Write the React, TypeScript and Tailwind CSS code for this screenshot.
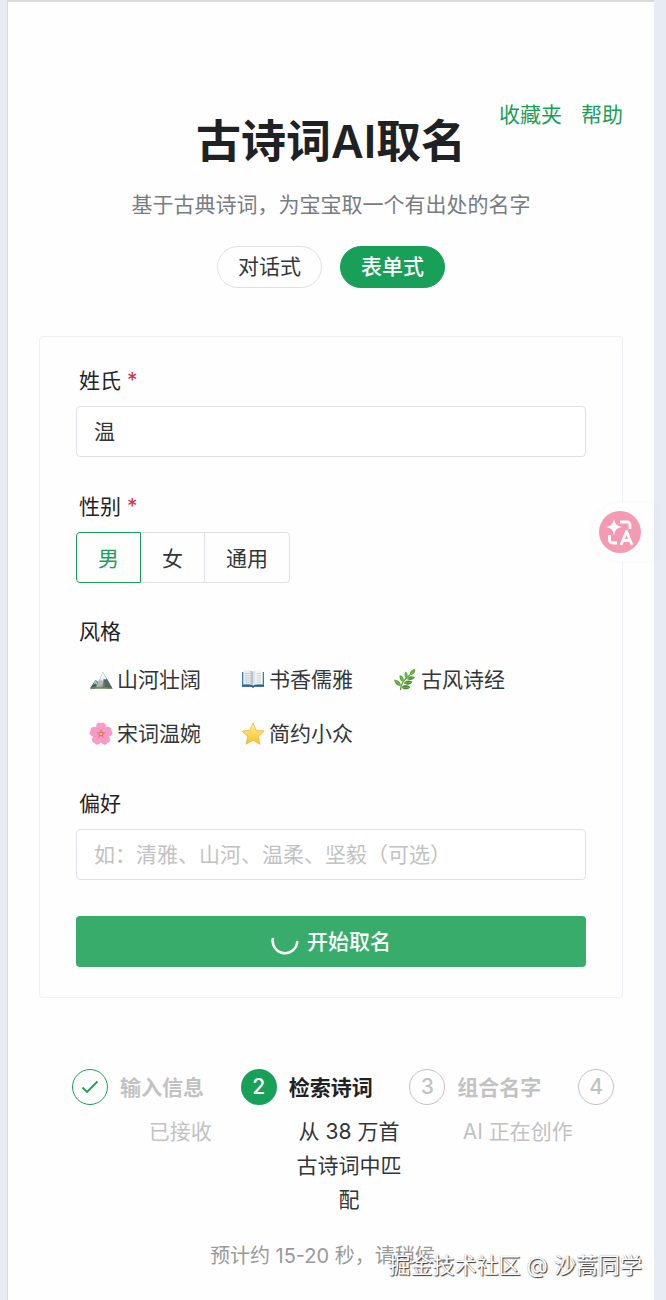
import React, { useState } from 'react';

const genders = ['男', '女', '通用'];

const MountainIcon = () => (
  <svg viewBox="0 0 24 24" className="w-6 h-6 shrink-0" aria-hidden="true">
    <path d="M1 20.5 6.5 12l3 2L14 4l9.5 16.5z" fill="#6f8087" />
    <path d="M13.8 4 9 14.5 6.8 20.5h6L14.6 12z" fill="#a9bcc6" />
    <path d="m13.8 4 3.6 6.3-1.2 1.8-1.5-1.6-1.2 3-1.6-2.2-1.6 2z" fill="#eef5f8" />
    <path d="m14.6 12 2 8.5h6.9L18 11z" fill="#58676e" />
    <path d="M1 20.5 6.5 12l2 3.5-2.2 5z" fill="#4d5b60" />
    <path d="M6.5 12 4 17l2.3-1.4L7.6 17l.8-1.6z" fill="#b5c5cc" />
    <path d="M1 20.6c2.5-2.4 5-2.6 7.4-1.4 2.3-1.8 4.4-.9 6 .2 2.4-1.6 6.3-1.2 9.1 1.2z" fill="#6d8a35" />
    <path d="m16 19 1-3 1 3zM19 19.4l1-3 1.2 3zM3.6 19l.9-2.5.9 2.5z" fill="#486a24" />
    <path d="m9.6 19.6 1.8-3.6 1 3.2z" fill="#c9a25a" />
  </svg>
);

const BookIcon = () => (
  <svg viewBox="0 0 24 24" className="w-6 h-6 shrink-0" aria-hidden="true">
    <path d="M1 4h22v14.600H1z" fill="#3f7da8" />
    <path d="M1 17h22v1.800h-9.500L12 20l-1.500-1.200H1z" fill="#2d608a" />
    <path d="M2.300 2.800C6 2 9.800 2.200 12 3.800v13.700c-2.600-1.400-6.200-1.400-9.700-.9z" fill="#e9eef0" />
    <path d="M21.700 2.800C18 2 14.200 2.200 12 3.800v13.700c2.600-1.400 6.200-1.400 9.700-.9z" fill="#f6f8f8" />
    <path d="M9.400 2.600c1 .2 1.900.6 2.600 1.200v13.700c-.8-.5-1.700-.8-2.600-.9z" fill="#bac4c9" />
    <path d="M12 3.800c.7-.6 1.400-.9 2.200-1.100v13.900c-.8.200-1.500.500-2.200.9z" fill="#dce2e5" />
    <path
      d="M4 5.500h4.500M4 7.700h4.500M4 9.900h4.500M4 12.100h4.500M4 14.300h4.500M15.500 5.500H20M15.500 7.700H20M15.500 9.900H20M15.500 12.100H20M15.500 14.300H20"
      stroke="#b3bcc0"
      strokeWidth=".7"
    />
  </svg>
);

const HerbIcon = () => (
  <svg viewBox="0 0 24 24" className="w-6 h-6 shrink-0" aria-hidden="true">
    <path d="M7.500 21.500c.3-5 3.500-10.500 10.500-15.500" fill="none" stroke="#5c9a34" strokeWidth="1.300" strokeLinecap="round" />
    <g fill="#55a838">
      <path d="M7.900 18.200C3.500 18 1.500 15 1.200 11.500c4 .4 6.800 2.600 6.700 6.700z" />
      <path d="M10.300 14C7.200 13 6 10 6.800 7c3.300 1 4.600 3.600 3.500 7z" />
      <path d="M13.200 10.600c-2.100-1.700-2.200-4.500-.5-7 2.400 1.900 2.600 4.600.5 7z" />
      <path d="M17.200 7c-.9-2.600.9-5.300 4.800-6 .6 3.500-1.500 6-4.800 6z" />
    </g>
    <g fill="#3f8c2e">
      <path d="M8.500 19.200c2.600-2.900 6-2.700 8.700.2-2.700 2.600-6.200 2.700-8.700-.2z" />
      <path d="M10.800 15.200c2-3 5.300-3.400 8.700-1.100-2.200 3-5.700 3.300-8.700 1.100z" />
      <path d="M14 11c1.600-2.700 4.500-3.400 7.800-1.800-1.500 2.900-4.900 3.600-7.800 1.800z" />
    </g>
    <path
      d="M2.500 12.800l5 5M7.600 8.500l2.500 4.800M12.800 5.200l.3 4.800M21 2.200l-3.500 4.400M9.500 19.200h6M12 15l6-.8M15 10.800l5.500-1.300"
      stroke="#93d06a"
      strokeWidth=".6"
    />
  </svg>
);

const petalAngles = [0, 72, 144, 216, 288];

const BlossomIcon = () => (
  <svg viewBox="0 0 24 24" className="w-6 h-6 shrink-0" aria-hidden="true">
    {petalAngles.map((angle) => (
      <g key={angle} transform={`rotate(${angle} 12 12)`}>
        <path
          d="M12 12C8 9.500 6.700 5.500 7.700 2.800 8.700.7 10.900.3 12 1.500c1.100-1.200 3.300-.8 4.300 1.300 1 2.700-.3 6.700-4.300 9.200z"
          fill="#f99cc5"
          stroke="#f07fb0"
          strokeWidth=".3"
        />
        <path d="M12 11.500V7.500" stroke="#e0568f" strokeWidth=".8" />
      </g>
    ))}
    <circle cx="12" cy="12" r="2.300" fill="#c9505c" />
    <circle cx="12" cy="12" r="1.600" fill="#ffd54a" />
  </svg>
);

const StarIcon = () => (
  <svg viewBox="0 0 24 24" className="w-6 h-6 shrink-0" aria-hidden="true">
    <defs>
      <linearGradient id="star-fill" x1="0" y1="0" x2="0" y2="1">
        <stop offset="0" stopColor="#fff0a0" />
        <stop offset="1" stopColor="#fdc01c" />
      </linearGradient>
    </defs>
    <path
      d="m12 .8 3.200 7.500 8 .8-6 5.300 1.800 7.900-7-4.100-7 4.100 1.800-7.900-6-5.300 8-.8z"
      fill="url(#star-fill)"
      stroke="#f2ae2b"
      strokeWidth=".7"
      strokeLinejoin="round"
    />
  </svg>
);

const TranslateIcon = () => (
  <svg viewBox="0 0 42 42" className="w-[42px] h-[42px]" aria-hidden="true">
    <circle cx="21" cy="21" r="21" fill="#f49ab3" />
    <path d="M15 8c1.200 5.200 2.600 6.800 8 8-5.400 1.200-6.800 2.800-8 8.500-1.200-5.700-2.600-7.300-8-8.500 5.400-1.200 6.800-2.800 8-8z" fill="#fff" />
    <g fill="none" stroke="#fff" strokeWidth="2.800">
      <path d="M21 11h6.500c2.300 0 3.500 1.200 3.500 3.500V18" />
      <path d="M10.500 24v4.500c0 2.300 1.200 3.500 3.500 3.500h4" />
      <path d="m22 34 5.500-13.500L33 34M24 29.500h7" strokeLinejoin="round" />
    </g>
  </svg>
);

const styles = [
  { name: '山河壮阔', icon: <MountainIcon /> },
  { name: '书香儒雅', icon: <BookIcon /> },
  { name: '古风诗经', icon: <HerbIcon /> },
  { name: '宋词温婉', icon: <BlossomIcon /> },
  { name: '简约小众', icon: <StarIcon /> },
];

const Steps = () => (
  <ol className="flex pl-[33px] pr-[9px] mt-[71px]">
    <li className="flex flex-1 gap-3 text-[#c2c2c2]">
      <span className="w-9 h-9 shrink-0 rounded-full border border-[#18a058] flex items-center justify-center">
        <svg viewBox="0 0 20 20" className="w-5 h-5" fill="none" stroke="#18a058" strokeWidth="1.800" aria-label="已完成">
          <path d="m2.500 10.500 4.500 4.500L17.500 4.500" />
        </svg>
      </span>
      <div className="flex-1">
        <h3 className="font-bold leading-[38px]">输入信息</h3>
        <p className="mt-2 leading-[34px] text-center">已接收</p>
      </div>
    </li>
    <li className="flex flex-1 gap-3 text-[#333639]" aria-current="step">
      <span className="w-9 h-9 shrink-0 rounded-full bg-[#18a058] text-white font-medium flex items-center justify-center">2</span>
      <div className="flex-1">
        <h3 className="font-bold leading-[38px] text-[#1f2225]">检索诗词</h3>
        <p className="mt-2 leading-[34px] text-center">从 38 万首古诗词中匹配</p>
      </div>
    </li>
    <li className="flex flex-1 gap-3 text-[#c2c2c2]">
      <span className="w-9 h-9 shrink-0 rounded-full border border-[#c2c2c2] font-medium flex items-center justify-center">3</span>
      <div className="flex-1">
        <h3 className="font-bold leading-[38px]">组合名字</h3>
        <p className="mt-2 leading-[34px] text-center">AI 正在创作</p>
      </div>
    </li>
    <li className="text-[#c2c2c2]">
      <span className="w-9 h-9 rounded-full border border-[#c2c2c2] font-medium flex items-center justify-center">4</span>
    </li>
  </ol>
);

const App = () => {
  const [surname, setSurname] = useState('温');
  const [gender, setGender] = useState('男');
  const [picked, setPicked] = useState<string[]>([]);
  const [preference, setPreference] = useState('');

  const toggleStyle = (name: string) => {
    setPicked(picked.includes(name) ? picked.filter((n) => n !== name) : [...picked, name]);
  };

  return (
    <div className="min-h-screen bg-[#e7ebf4] pl-[7px] pr-3 flex font-['Inter','Noto_Sans_CJK_SC',sans-serif] text-[21px] text-[#333639]">
      <main className="relative flex-1 bg-[#fefefe] border-t-2 border-l border-[#d9dadd] px-[31px] pt-[110px]">
        <nav className="absolute right-[31px] top-[97px] flex gap-[19px] leading-8 text-[#18a058]">
          <a href="#favorites">收藏夹</a>
          <a href="#help">帮助</a>
        </nav>

        <header className="text-center">
          <h1 className="text-[45px] leading-[60px] font-semibold text-[#1f2225]">古诗词AI取名</h1>
          <p className="mt-4 leading-[34px] text-[#767c82]">基于古典诗词，为宝宝取一个有出处的名字</p>
          <div className="mt-6 flex justify-center gap-[18px]">
            <button type="button" className="h-[42px] px-5 rounded-full border border-[#e0e0e6]">
              对话式
            </button>
            <button type="button" className="h-[42px] px-5 rounded-full border border-[#18a058] bg-[#18a058] text-white font-medium">
              表单式
            </button>
          </div>
        </header>

        <form className="mt-12 rounded border border-[#efeff5] px-9 pt-[27px] pb-[30px]" onSubmit={(e) => e.preventDefault()}>
          <div className="mb-[33px]">
            <label htmlFor="surname" className="block px-[3px] mb-2 leading-[34px] text-[#1f2225]">
              姓氏 <span className="text-[#d03050]">*</span>
            </label>
            <input
              id="surname"
              value={surname}
              onChange={(e) => setSurname(e.target.value)}
              className="block w-full h-[51px] px-[17px] pb-1 rounded border border-[#e0e0e6] bg-white outline-none"
            />
          </div>

          <fieldset className="mb-8">
            <legend className="px-[3px] mb-2 leading-[34px] text-[#1f2225]">
              性别 <span className="text-[#d03050]">*</span>
            </legend>
            <div className="flex">
              {genders.map((item) => (
                <label
                  key={item}
                  className="relative h-[51px] px-[21px] pt-0.5 -ml-px first:ml-0 border border-[#e0e0e6] first:rounded-l last:rounded-r flex items-center has-checked:z-10 has-checked:border-[#18a058] has-checked:text-[#18a058]"
                >
                  <input
                    type="radio"
                    name="gender"
                    value={item}
                    checked={gender === item}
                    onChange={() => setGender(item)}
                    className="sr-only"
                  />
                  {item}
                </label>
              ))}
            </div>
          </fieldset>

          <fieldset className="mb-[30px]">
            <legend className="px-[3px] mb-2 leading-[34px] text-[#1f2225]">风格</legend>
            <div className="flex flex-wrap gap-x-3.5 gap-y-2">
              {styles.map((item) => (
                <button
                  key={item.name}
                  type="button"
                  aria-pressed={picked.includes(item.name)}
                  onClick={() => toggleStyle(item.name)}
                  className="h-[46px] px-[13px] rounded flex items-center gap-1 aria-pressed:bg-[#e7f5ee]"
                >
                  {item.icon}
                  {item.name}
                </button>
              ))}
            </div>
          </fieldset>

          <div className="mb-9">
            <label htmlFor="preference" className="block px-[3px] mb-2 leading-[34px] text-[#1f2225]">
              偏好
            </label>
            <input
              id="preference"
              value={preference}
              onChange={(e) => setPreference(e.target.value)}
              placeholder="如：清雅、山河、温柔、坚毅（可选）"
              className="block w-full h-[51px] px-[17px] rounded border border-[#e0e0e6] bg-white outline-none placeholder:text-[#c2c2c2]"
            />
          </div>

          <button
            type="submit"
            className="w-full h-[51px] rounded bg-[#38ad6b] text-white font-medium flex items-center justify-center gap-2"
          >
            <svg viewBox="0 0 28 28" className="w-7 h-7" fill="none" stroke="#fff" strokeWidth="2.600" strokeLinecap="round" aria-hidden="true">
              <path d="M1.800 11A12.300 12.300 0 1 0 26.200 14" />
            </svg>
            开始取名
          </button>
        </form>

        <Steps />

        <p className="mt-[22px] leading-[34px] text-center text-[20px] text-[#999]">预计约 15-20 秒，请稍候...</p>

        <button
          type="button"
          aria-label="翻译"
          className="absolute right-0 top-[501px] w-[62px] h-[58px] pl-[7px] rounded-l-full bg-[#fefefe] flex items-center shadow-[0_0_6px_rgba(0,0,0,0.03)] z-10"
        >
          <TranslateIcon />
        </button>
        <span className="absolute right-3 bottom-[19px] leading-8 text-[22px] text-white [text-shadow:1px_1px_1px_#333,0_0_1px_#999]">
          掘金技术社区 @ 沙蒿同学
        </span>
      </main>
    </div>
  );
};

export default App;
